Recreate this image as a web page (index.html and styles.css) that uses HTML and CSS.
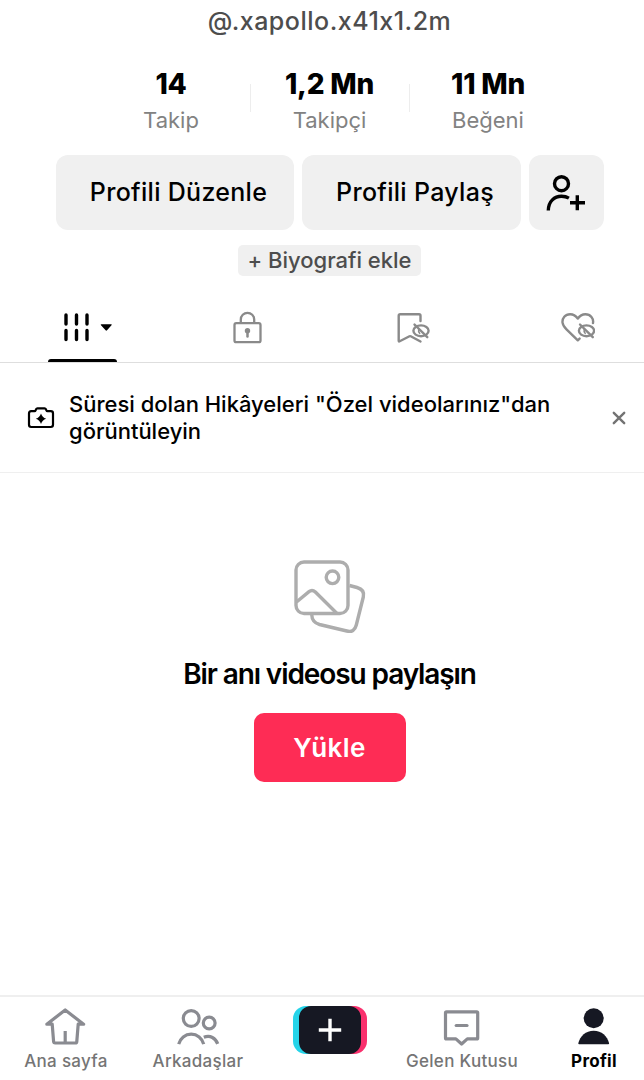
FILE: index.html
```html
<!DOCTYPE html>
<html lang="tr">
<head>
   <meta charset="UTF-8">
   <meta name="viewport" content="width=device-width, initial-scale=1.0">
   <title>Profil</title>
   <link rel="stylesheet" href="styles.css">
</head>
<body>
   <div class="screen">
      <div class="profile">
         <p class="username">@.xapollo.x41x1.2m</p>
         <div class="stats">
            <div class="stat"><strong>14</strong><span>Takip</span></div>
            <div class="stat"><strong>1,2 Mn</strong><span>Takipçi</span></div>
            <div class="stat"><strong>11 Mn</strong><span>Beğeni</span></div>
         </div>
         <div class="actions">
            <button class="btn btn-edit">Profili Düzenle</button>
            <button class="btn btn-share">Profili Paylaş</button>
            <button class="btn btn-add" aria-label="Arkadaş ekle">
               <svg width="40" height="38" viewBox="0 0 40 38" fill="none" stroke="#000" stroke-width="3.4">
                  <circle cx="15.5" cy="9.7" r="7"/>
                  <path d="M2.3 36.500C2.5 27 8.500 22.300 15.500 22.300c3 0 5.500.7 7.400 1.800"/>
                  <path d="M24 28.700h15M31.300 21.200v15"/>
               </svg>
            </button>
         </div>
         <button class="bio">+ Biyografi ekle</button>
      </div>

      <div class="tabs">
         <div class="tab active">
            <svg width="50" height="36" viewBox="0 0 50 36">
               <path d="M3 5v9M13.500 5v9M24 5v9M3 20.500v9M13.500 20.500v9M24 20.500v9" stroke="#000" stroke-width="3.4" stroke-linecap="round"/>
               <path d="M38.500 14.200h9.500q1.400 0 .5 1.100l-4.500 5q-.7.8-1.400 0l-4.600-5q-.9-1.100.5-1.100z"/>
            </svg>
         </div>
         <div class="tab">
            <svg width="30" height="36" viewBox="0 0 30 36" fill="none" stroke="#8a8a8a" stroke-width="2.3">
               <rect x="1.500" y="13.200" width="26" height="19" rx="1.800"/>
               <path d="M7.800 13V9.500a6.700 6.700 0 0 1 13.400 0V13"/>
               <circle cx="14.500" cy="20.700" r="2.700" fill="#8a8a8a" stroke="none"/>
               <path d="M14.500 21v5.500" stroke-width="2.5" stroke-linecap="round"/>
            </svg>
         </div>
         <div class="tab">
            <svg width="34" height="36" viewBox="0 0 34 36" fill="none" stroke="#8a8a8a" stroke-width="2.4" stroke-linecap="round" stroke-linejoin="round">
               <path d="M24.500 11V5.800q0-1.500-1.500-1.500H4.200q-1.500 0-1.500 1.500v25q0 1 1 .5l9.800-5q.6-.3 1.200 0L24.500 31.500"/>
               <ellipse cx="25" cy="20.800" rx="7.600" ry="5.400"/>
               <path d="M18.500 14.500l12.800 12.700"/>
               <path d="M22.700 18.800q-.6 2.600 1 4.600" stroke-width="1.500"/>
            </svg>
         </div>
         <div class="tab">
            <svg width="34" height="36" viewBox="0 0 34 36" fill="none" stroke="#8a8a8a" stroke-width="2.4" stroke-linecap="round" stroke-linejoin="round">
               <path d="M32 13c.8-4.300-2.400-8.800-7.600-8.800-3.200 0-5.700 1.600-7.600 4.400-1.900-2.800-4.500-4.400-7.700-4.400-5 0-8 4.200-7.600 8.300.3 3 1.800 4.700 4 6.900l11.300 10.900 1.800-1.700"/>
               <ellipse cx="25.500" cy="20.800" rx="7.600" ry="5.400"/>
               <path d="M19 14.500l12.800 12.700"/>
               <path d="M23.200 18.800q-.6 2.600 1 4.600" stroke-width="1.500"/>
            </svg>
         </div>
      </div>

      <div class="notice">
         <svg width="28" height="24" viewBox="0 0 28 24" fill="none" stroke="#000" stroke-width="2.2" stroke-linejoin="round">
            <path d="M4.200 5.200h3.300q.8 0 1.100-.8l.5-1.100q.4-.9 1.300-.9h7.200q.9 0 1.300.9l.5 1.100q.3.8 1.100.8h3.300q2.200 0 2.200 2.200v11.400q0 2.200-2.200 2.200H4.200Q2 21 2 18.800V7.400Q2 5.200 4.200 5.200z"/>
            <path d="M14 7.600q1.200 4 5.200 5.200-4 1.200-5.200 5.200-1.200-4-5.200-5.200 4-1.200 5.200-5.200z" fill="#000" stroke="none"/>
         </svg>
         <p>Süresi dolan Hikâyeleri "Özel videolarınız"dan<br>görüntüleyin</p>
         <svg width="14" height="14" viewBox="0 0 14 14" stroke="#737373" stroke-width="2.4" stroke-linecap="round">
            <path d="M1.800 1.800l10.400 10.400M12.200 1.800L1.800 12.200"/>
         </svg>
      </div>

      <div class="empty">
         <svg width="76" height="78" viewBox="0 0 76 78" fill="none" stroke="#adadad" stroke-width="3.4">
            <rect x="4" y="4" width="52" height="51.500" rx="8"/>
            <circle cx="40.500" cy="19.300" r="6.300"/>
            <path d="M4.500 44l12.500-10.300q3.200-2.400 6.400.4L45 55.500"/>
            <path d="M57.500 27.500l7.500 2q8 2.200 6.300 9.500l-7 28q-2 8-9.500 6L27.500 66.500q-7.500-2-7.800-10"/>
         </svg>
         <h2>Bir anı videosu paylaşın</h2>
         <button class="upload">Yükle</button>
      </div>

      <div class="navbar">
         <a class="nav-item">
            <svg width="44" height="40" viewBox="0 0 44 40" fill="none" stroke="#8a8b91" stroke-width="3.2" stroke-linejoin="round">
               <path d="M8.200 18.200H2.800L21.200 4l18.400 14.200h-5.400l-1.400 17.300q-.1 1.500-1.600 1.500h-20q-1.500 0-1.600-1.500z"/>
               <path d="M21.200 25v12"/>
            </svg>
            <span>Ana sayfa</span>
         </a>
         <a class="nav-item">
            <svg width="44" height="40" viewBox="0 0 44 40" fill="none" stroke="#8a8b91" stroke-width="3.2">
               <circle cx="15.200" cy="12.500" r="7.900"/>
               <circle cx="33.200" cy="17" r="5.900"/>
               <path d="M2.700 38.200c1.500-6 6.500-10 12.500-10s11 4 12.500 10M27.800 31.300c6.500-2.500 11.800.8 13.900 6.600"/>
            </svg>
            <span>Arkadaşlar</span>
         </a>
         <a class="nav-item">
            <span class="create"><span class="create-inner">
               <svg width="24" height="24" viewBox="0 0 24 24" stroke="#fff" stroke-width="3.4"><path d="M.8 12h22.400M12 .8v22.400"/></svg>
            </span></span>
         </a>
         <a class="nav-item">
            <svg width="44" height="40" viewBox="0 0 44 40" fill="none" stroke="#8a8b91" stroke-width="3.2" stroke-linejoin="round">
               <path d="M6.500 5.800h30.200q1 0 1 1v25.100q0 1-1 1h-9.400L21.600 38l-5.700-5.100H6.500q-1 0-1-1V6.800q0-1 1-1z"/>
               <path d="M16.200 19.500h10.800" stroke-linecap="round"/>
            </svg>
            <span>Gelen Kutusu</span>
         </a>
         <a class="nav-item selected">
            <svg width="44" height="40" viewBox="0 0 44 40" fill="#161823">
               <circle cx="21.700" cy="12.300" r="10"/>
               <path d="M7.200 38.300q-1 0-.9-1C8 30 13.800 24.700 21.700 24.700S35.300 30 37.100 37.300q.1 1-.9 1z"/>
            </svg>
            <span>Profil</span>
         </a>
      </div>
   </div>
</body>
</html>
```

FILE: styles.css
```css
* {
   box-sizing: border-box;
}
body {
   margin: 0;
   overflow: hidden;
   background-color: #fff;
   font-family: Inter, "Liberation Sans", sans-serif;
   font-feature-settings: "calt" 0;
   color: #000;
}
button {
   border: none;
   padding: 0;
   font-family: inherit;
   font-feature-settings: inherit;
   color: inherit;
}
p, h2 {
   margin: 0;
}
svg {
   display: block;
   flex: none;
}
.screen {
   display: flex;
   flex-direction: column;
   width: 660px;
   height: 1080px;
}
.profile {
   display: flex;
   flex-direction: column;
   align-items: center;
   width: 659px;
   height: 292px;
}
.username {
   height: 66px;
   padding-top: 6px;
   font-size: 25px;
   line-height: 30px;
   font-weight: 500;
   letter-spacing: 0.5px;
   color: #4d4d4d;
}
.stats {
   display: flex;
   height: 89px;
}
.stat {
   position: relative;
   display: flex;
   flex-direction: column;
   align-items: center;
   width: 158.5px;
}
.stat + .stat::before {
   content: "";
   position: absolute;
   left: 0;
   top: 18px;
   width: 1px;
   height: 28px;
   background-color: #ededed;
}
.stat strong {
   font-size: 28px;
   line-height: 36px;
   font-weight: 800;
   letter-spacing: -0.2px;
}
.stat span {
   margin-top: 4px;
   font-size: 22px;
   line-height: 28px;
   color: #828282;
}
.actions {
   display: flex;
   gap: 8px;
   height: 75px;
}
.btn {
   display: flex;
   align-items: center;
   justify-content: center;
   border-radius: 12px;
   background-color: #f0f0f0;
   font-size: 25px;
   font-weight: 500;
   letter-spacing: 0.3px;
}
.btn-edit {
   width: 238px;
   padding: 0 0 1px 8px;
}
.btn-share {
   width: 219px;
   padding: 0 0 1px 8px;
}
.btn-add {
   width: 75px;
}
.bio {
   width: 183px;
   height: 31px;
   margin-top: 15px;
   border-radius: 5px;
   background-color: #f0f0f0;
   font-size: 22px;
   line-height: 31px;
   font-weight: 500;
   color: #4d4d4d;
}
.tabs {
   display: flex;
   height: 71px;
   border-bottom: 1px solid #dedede;
}
.tab {
   position: relative;
   display: flex;
   justify-content: center;
   width: 165px;
   padding-top: 18px;
}
.tab.active {
   padding-left: 10px;
}
.tab.active::after {
   content: "";
   position: absolute;
   left: 48px;
   bottom: 0;
   width: 69px;
   height: 3px;
   border-radius: 3px 3px 0 0;
   background-color: #000;
}
.notice {
   display: flex;
   align-items: center;
   width: 644px;
   height: 110px;
   padding: 0 18px 0 27px;
   border-bottom: 1px solid #efefef;
}
.notice p {
   flex: 1;
   margin-left: 14px;
   font-size: 22px;
   line-height: 27px;
   font-weight: 500;
   white-space: nowrap;
}
.empty {
   display: flex;
   flex: 1;
   flex-direction: column;
   align-items: center;
   width: 659px;
   padding-top: 85px;
}
.empty h2 {
   margin-top: 20px;
   font-size: 28px;
   line-height: 36px;
   font-weight: 600;
   letter-spacing: -1.1px;
}
.upload {
   width: 152px;
   height: 69px;
   margin-top: 21px;
   border-radius: 10px;
   background-color: #fe2c55;
   font-size: 26px;
   font-weight: 600;
   letter-spacing: 0.4px;
   color: #fff;
}
.navbar {
   display: flex;
   height: 85px;
   border-top: 2px solid #efefef;
}
.nav-item {
   display: flex;
   flex-direction: column;
   align-items: center;
   width: 132px;
   padding-top: 9px;
   font-size: 17px;
   line-height: 24px;
   font-weight: 500;
   letter-spacing: 0.3px;
   color: #757575;
}
.nav-item svg {
   margin-bottom: 3px;
}
.selected {
   font-weight: 700;
   color: #000;
}
/* cyan and pink edges show on both sides of the dark button */
.create {
   display: flex;
   justify-content: center;
   width: 74px;
   height: 48px;
   border-radius: 13px;
   background: linear-gradient(to right, #25d4e9 50%, #f9306d 50%);
}
.create-inner {
   display: flex;
   align-items: center;
   justify-content: center;
   width: 62px;
   height: 48px;
   border-radius: 12px;
   background-color: #161823;
}
.create-inner svg {
   margin: 0;
}
```
